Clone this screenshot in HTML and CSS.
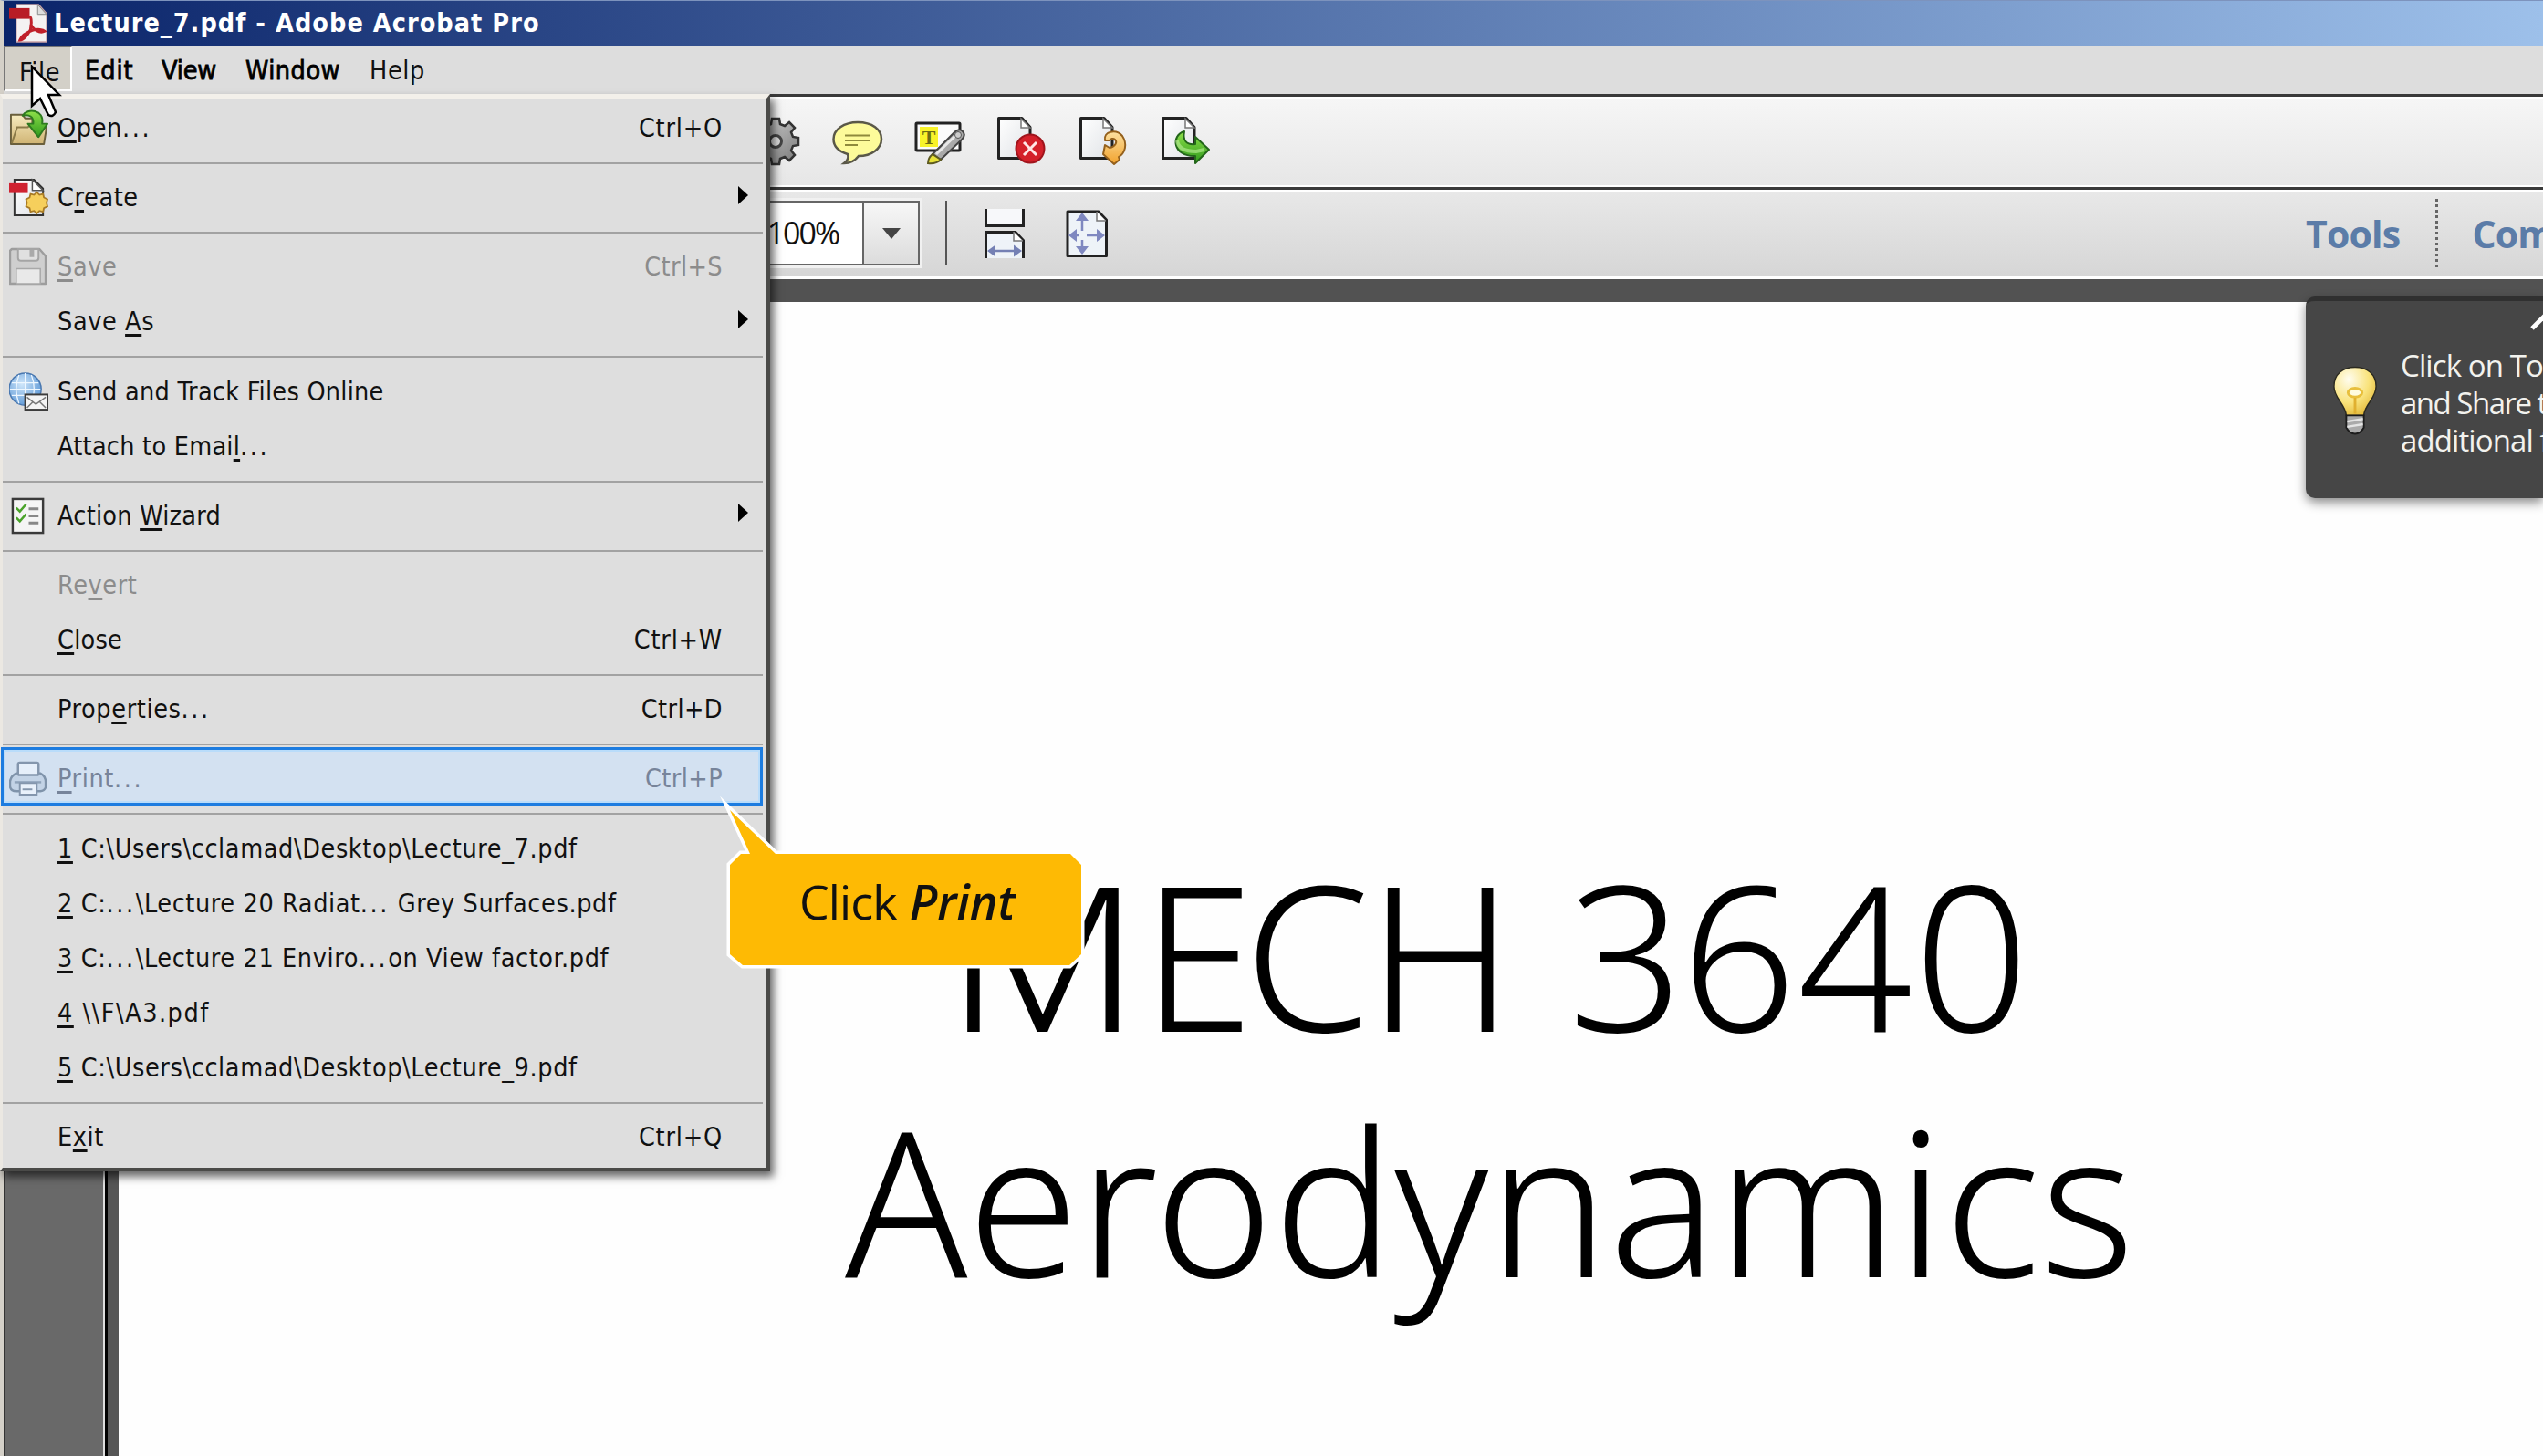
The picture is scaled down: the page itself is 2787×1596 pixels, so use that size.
FILE: index.html
```
<!DOCTYPE html>
<html lang="en">
<head>
<meta charset="utf-8">
<title>Lecture_7.pdf - Adobe Acrobat Pro</title>
<link rel="stylesheet" href="styles.css">
</head>
<body>
<svg width="0" height="0" class="defs" aria-hidden="true">
  <defs>
    <linearGradient id="paper" x1="0" y1="0" x2="1" y2="1"><stop offset="0" stop-color="#fff"/><stop offset="1" stop-color="#dfe2e6"/></linearGradient>
    <linearGradient id="folder" x1="0" y1="0" x2="0" y2="1"><stop offset="0" stop-color="#f7ecc0"/><stop offset="1" stop-color="#cfb373"/></linearGradient>
    <linearGradient id="green" x1="0" y1="0" x2="0" y2="1"><stop offset="0" stop-color="#8ee04a"/><stop offset="1" stop-color="#2f9a1c"/></linearGradient>
    <linearGradient id="gold" x1="0" y1="0" x2="0" y2="1"><stop offset="0" stop-color="#fce0a0"/><stop offset="1" stop-color="#f2a22c"/></linearGradient>
    <linearGradient id="steel" x1="0" y1="0" x2="1" y2="1"><stop offset="0" stop-color="#d8d8d8"/><stop offset="1" stop-color="#777"/></linearGradient>
    <radialGradient id="globe" cx=".4" cy=".35" r=".7"><stop offset="0" stop-color="#cfe6fa"/><stop offset="1" stop-color="#5b97d6"/></radialGradient>
    <radialGradient id="bulb" cx=".35" cy=".25" r=".8"><stop offset="0" stop-color="#fffdf0"/><stop offset=".6" stop-color="#f9e37c"/><stop offset="1" stop-color="#e3b93a"/></radialGradient>
    <g id="sheet"><path d="M2.500 3.500H28l9 10V47.500H2.500Z" fill="url(#paper)" stroke="#222" stroke-width="3" stroke-linejoin="round"/><path d="M27 4v10h10Z" fill="#fff" stroke="#777" stroke-width="1.500"/></g>
  </defs>
</svg>

<header class="titlebar">
  <svg class="app-icon" viewBox="0 0 44 44"><path d="M8 1h25l9 10v32H8Z" fill="#f4f2f2" stroke="#c9a3a6" stroke-width="1.500"/><path d="M32 1v11h10Z" fill="#ddd" stroke="#888"/><path d="M0 5h23v12H0Z" fill="#b81c26"/><path d="M23 14c4 4 1 11 1 15-3 6-8 12-12 12 2-6 8-9 14-11 6-2 12-1 14 1-6 3-13-2-16-8" fill="none" stroke="#c0202a" stroke-width="3"/></svg>
  <span>Lecture_7.pdf - Adobe Acrobat Pro</span>
</header>

<nav class="menubar">
  <span class="mb-item mb-file">File</span>
  <span class="mb-item mb-edit strong">Edit</span>
  <span class="mb-item mb-view strong">View</span>
  <span class="mb-item mb-window strong">Window</span>
  <span class="mb-item mb-help">Help</span>
</nav>

<section class="toolbar quick-tools">
  <svg class="tool" viewBox="0 0 56 56"><path d="M24 4h8l1 6 5 2 5-4 6 6-4 5 2 5 6 1v8l-6 1-2 5 4 5-6 6-5-4-5 2-1 6h-8l-1-6-5-2-5 4-6-6 4-5-2-5-6-1v-8l6-1 2-5-4-5 6-6 5 4 5-2Z" fill="url(#steel)" stroke="#333" stroke-width="2.500"/><circle cx="28" cy="29" r="6.500" fill="#ddd" stroke="#444" stroke-width="3"/></svg>
  <svg class="tool" viewBox="0 0 56 56"><path d="M28 8c16 0 26 8 26 18.500S43 45 29 45c-3 4-8 8-16 8 4-3 5-7 4-10C7 40 1.500 34 1.500 26.500 1.500 16 13 8 28 8Z" fill="#fdfb9a" stroke="#5a5848" stroke-width="2.500"/><path d="M14 22.500h28M14 28h28M14 33h14" stroke="#8f8a3c" stroke-width="2.200"/></svg>
  <svg class="tool" viewBox="0 0 56 56"><rect x="2" y="9" width="48" height="30" rx="1" fill="#fbfbfb" stroke="#222" stroke-width="3"/><rect x="6" y="13" width="20" height="22" fill="#f8f32a"/><text x="16" y="32" class="tool-letter">T</text><path d="M20 43 44 19q5-5 9-1t-1 9L29 49Z" fill="#aaa" stroke="#444" stroke-width="2"/><path d="M24 43 47 21" stroke="#e8e8e8" stroke-width="3"/><circle cx="48" cy="22" r="3.500" fill="#ccc" stroke="#555"/><path d="M20 43l9 6q-5 5-14 4 0-6 5-10Z" fill="#e8e337" stroke="#5d5a20" stroke-width="2"/></svg>
  <svg class="tool" viewBox="0 0 56 56"><use href="#sheet"/><circle cx="37" cy="37" r="15.500" fill="#d4202a" stroke="#a0141c" stroke-width="2"/><path d="M30 30 44 44M44 30 30 44" stroke="#ffe6e6" stroke-width="3"/></svg>
  <svg class="tool" viewBox="0 0 56 56"><use href="#sheet"/><path d="M29 28C27 18 41 15 48 23c6 9 3 19-4 23l1 3-6 5L27 43l2-10 5 3c6-1 9-6 6-9-2-2-5-1-6 1Z" fill="url(#gold)" stroke="#94601c" stroke-width="2" stroke-linejoin="round"/></svg>
  <svg class="tool" viewBox="0 0 56 56"><use href="#sheet"/><path d="M26 18C11 22 13 46 38 45v8L53 38 38 24v8C28 33 24 28 26 18Z" fill="url(#green)" stroke="#23661a" stroke-width="2" stroke-linejoin="round"/><path d="M18 28c1 8 8 12 21 12l9-2" fill="none" stroke="#bdf09a" stroke-width="4" opacity=".6"/></svg>
</section>

<section class="toolbar view-tools">
  <div class="zoom-box"><span class="zoom-value">100%</span><span class="zoom-drop"><svg viewBox="0 0 20 12"><path d="M0 0h20L10 12Z" fill="#444"/></svg></span></div>
  <i class="divider"></i>
  <svg class="fit" viewBox="0 0 46 54"><path d="M2.500 0v18.500h41V0" fill="#f7f8fa" stroke="#222" stroke-width="3"/><path d="M2.500 54V25.500H35l8.500 9V54" fill="#eef3f8" stroke="#222" stroke-width="3"/><path d="M33 25v10h10" fill="#fff" stroke="#777" stroke-width="1.500"/><path d="M8 46h30" stroke="#7480b4" stroke-width="2.500"/><path d="M4 46l9-6.500v13ZM42 46l-9-6.500v13Z" fill="#7480b4"/></svg>
  <svg class="fit" viewBox="0 0 46 54"><path d="M2 3H36l8.500 9V51.500H2Z" fill="#eef3f8" stroke="#222" stroke-width="3" stroke-linejoin="round"/><path d="M34 3v10h10" fill="#fff" stroke="#777" stroke-width="1.500"/><g stroke="#7f88c0" stroke-width="2.500"><path d="M18 10v14M18 34v12M8 29h7M23 29h14"/></g><path d="M18 4l7 9H11ZM18 50l7-9H11ZM3 29l9-7v14ZM43 29l-9-7v14Z" fill="#7f88c0"/></svg>
  <div class="panels"><span>Tools</span><i class="dots"></i><span>Comment</span></div>
</section>

<main class="workspace">
  <aside class="nav-pane"></aside>
  <article class="page">
    <p class="line-one"><span class="g-m">M</span><span class="g-e">E</span><span class="g-c">C</span>H <span class="g-c">3</span>640</p>
    <p class="line-two">Aerodynamics</p>
  </article>
</main>

<div class="hint">
  <svg class="bulb" viewBox="0 0 52 80"><path d="M26 2C12 2 2 10 2 24c0 14 13 20 14 33h20C37 44 50 38 50 24 50 10 40 2 26 2Z" fill="url(#bulb)" stroke="#2b2a20" stroke-width="1.500"/><ellipse cx="26" cy="31" rx="8" ry="5" fill="#fffce0" stroke="#e8bf3c" stroke-width="3"/><path d="M26 37v18" stroke="#e0b030" stroke-width="3"/><path d="M16 57h20v14q-4 7-10 7t-10-7Z" fill="#aaa" stroke="#1c1c1c" stroke-width="2"/><path d="M17 64l18-3M17 70l18-3" stroke="#e4e4e4" stroke-width="2.500"/></svg>
  <p>Click on Tools,<br><span class="tight">and Share to</span><br>additional features</p>
  <svg class="hint-close" viewBox="0 0 20 20"><path d="M2 18 18 2" stroke="#fff" stroke-width="5"/></svg>
</div>

<div class="menu">
  <div class="row"><svg class="ic" viewBox="0 0 44 44"><path d="M2 40V7h13l3 4h8v10h16l-3 19Z" fill="url(#folder)" stroke="#6a5f3c" stroke-width="2" stroke-linejoin="round"/><path d="M3 39 9 21h12l4-4h12" fill="none" stroke="#8b7a48" stroke-width="2"/><path d="M15 8C20-1 40 1 37 17h6L33 32 21 17h6C28 9 22 6 15 8Z" fill="url(#green)" stroke="#2e7a20" stroke-width="2" stroke-linejoin="round"/></svg><span><u>O</u>pen<b>...</b></span><kbd>Ctrl+O</kbd></div>
  <hr>
  <div class="row"><svg class="ic" viewBox="0 0 44 44"><path d="M6 2h22l10 10v30H6Z" fill="url(#paper)" stroke="#333" stroke-width="2"/><path d="M26 2v12h12Z" fill="#fff" stroke="#555" stroke-width="1.500"/><path d="M0 6h21v11H0Z" fill="#cf2230"/><path d="M31 16l3 3 4-1 1 4 4 2-1 4 1 4-4 2-1 4-4-1-3 3-3-3-4 1-1-4-4-2 1-4-1-4 4-2 1-4 4 1Z" fill="#f6cf5c" stroke="#a87a24" stroke-width="1.800"/></svg><span>C<u>r</u>eate</span><i class="arrow"></i></div>
  <hr>
  <div class="row off"><svg class="ic" viewBox="0 0 44 44"><path d="M3 2h31l7 8v31H1V4Z" fill="#cfcfcf" stroke="#9d9d9d" stroke-width="2.500" stroke-linejoin="round"/><path d="M10 2v10q0 3 3 3h17q3 0 3-3V2Z" fill="#e0e0e0" stroke="#a5a5a5" stroke-width="2"/><path d="M23 3h5v8h-5Z" fill="#aaa"/><path d="M8 24h27v17H8Z" fill="#e9e9e9" stroke="#a8a8a8" stroke-width="1.500"/></svg><span><u>S</u>ave</span><kbd class="snug-key">Ctrl+S</kbd></div>
  <div class="row"><span>Save <u>A</u>s</span><i class="arrow"></i></div>
  <hr>
  <div class="row"><svg class="ic" viewBox="0 0 44 44"><circle cx="18" cy="19" r="18" fill="url(#globe)" stroke="#4a78b0" stroke-width="1.500"/><path d="M3 12h30M1 19h34M3 26h30M18 1v36M11 3q-6 16 0 32M25 3q6 16 0 32" fill="none" stroke="#eef7ff" stroke-width="1.300"/><rect x="18" y="25" width="25" height="17" fill="#f4f4f4" stroke="#3c3c3c" stroke-width="2"/><path d="M20 28l10 8 11-8M20 40l7-7M41 40l-7-7" fill="none" stroke="#777" stroke-width="1.500"/></svg><span class="snug">Send and Track Files Online</span></div>
  <div class="row"><span class="snug">Attach to Emai<u>l</u><b>...</b></span></div>
  <hr>
  <div class="row"><svg class="ic" viewBox="0 0 44 44"><rect x="4" y="3" width="34" height="38" fill="#f5f5f5" stroke="#3a3a3a" stroke-width="2.500"/><path d="M8 13l4 4 7-8M8 24l4 4 7-8" fill="none" stroke="#4aa32a" stroke-width="2.500"/><path d="M22 14h11M22 22h11M22 30h11" stroke="#888" stroke-width="3"/></svg><span class="snug">Action <u>W</u>izard</span><i class="arrow"></i></div>
  <hr>
  <div class="row off"><span>Re<u>v</u>ert</span></div>
  <div class="row"><span class="snug"><u>C</u>lose</span><kbd>Ctrl+W</kbd></div>
  <hr>
  <div class="row"><span>Prop<u>e</u>rties<b>...</b></span><kbd class="snug-key">Ctrl+D</kbd></div>
  <hr>
  <div class="row off picked"><svg class="ic" viewBox="0 0 44 44"><path d="M8 16h27q6 3 6 10v6q-2 4-6 4H8q-6 0-7-5v-6q1-6 7-9Z" fill="#c3d3e6" stroke="#7f93aa" stroke-width="2.500"/><rect x="10" y="4" width="23" height="14" rx="2" fill="#e6effa" stroke="#8496ad" stroke-width="2.500"/><path d="M6 26h30" stroke="#8fa3ba" stroke-width="2.500"/><path d="M12 27h19v13H12Z" fill="#e9f1fb" stroke="#8496ad" stroke-width="2"/><path d="M15 34h11" stroke="#8496ad" stroke-width="2"/></svg><span><u>P</u>rint<b>...</b></span><kbd class="snug-key">Ctrl+P</kbd></div>
  <hr>
  <div class="row"><span><u>1</u> C:\Users\cclamad\Desktop\Lecture_7.pdf</span></div>
  <div class="row"><span><u>2</u> C:<b>...</b>\Lecture 20 Radiat<b>...</b> Grey Surfaces.pdf</span></div>
  <div class="row"><span><u>3</u> C:<b>...</b>\Lecture 21 Enviro<b>...</b>on View factor.pdf</span></div>
  <div class="row"><span class="wide"><u>4</u> \\F\A3.pdf</span></div>
  <div class="row"><span><u>5</u> C:\Users\cclamad\Desktop\Lecture_9.pdf</span></div>
  <hr>
  <div class="row"><span>E<u>x</u>it</span><kbd>Ctrl+Q</kbd></div>
</div>

<div class="callout">
  <svg viewBox="0 0 400 190"><path d="M10 14 32 62H22L10 74V172L24 184H382L395 172V74L383 62H60Z" class="bubble"/></svg>
  <p><span>Click</span> <em>Print</em></p>
</div>

<svg class="cursor" viewBox="0 0 36 60"><path d="M2 2V45l9-8 9 18q5 3 8-3L20 33H32Z" fill="#fff" stroke="#000" stroke-width="2.500"/></svg>
</body>
</html>
```
FILE: styles.css
```
*, *::before { box-sizing: border-box; }
html, body { height: 100%; }
body {
  margin: 0;
  display: flex;
  flex-direction: column;
  overflow: hidden;
  position: relative;
  background: #fff;
  color: #111;
  font: 28.5px "DejaVu Sans Condensed", "DejaVu Sans", sans-serif;
}
p { margin: 0; }
svg { display: block; flex: none; }
.defs { position: absolute; }

.titlebar {
  height: 50px;
  flex: none;
  display: flex;
  align-items: center;
  gap: 6px;
  padding-left: 6px;
  border-left: 4px solid #d4d0c8;
  border-top: 1px solid #7d93bd;
  background: linear-gradient(90deg, #0a246a, #9dc0ea);
  color: #fff;
  font-weight: bold;
  letter-spacing: 1.05px;
  line-height: 48px;
}
.app-icon { width: 43px; height: 43px; }

.menubar {
  height: 56px;
  flex: none;
  display: flex;
  background: #dddddd;
  border-left: 4px solid #d4d0c8;
  border-bottom: 3px solid #3a3a3a;
  line-height: 56px;
}
.mb-item { flex: none; }
.strong { -webkit-text-stroke: .8px #000; color: #000; }
.mb-file { width: 75px; height: 50px; padding-left: 15px; line-height: 56px; background: #d3d0c8; border: 2px solid; border-color: #777 #fff #fff #777; letter-spacing: .6px; }
.mb-edit { margin-left: 14px; width: 84px; letter-spacing: 1px; }
.mb-view { width: 92px; letter-spacing: -.2px; }
.mb-window { width: 136px; letter-spacing: .5px; }
.mb-help { letter-spacing: .6px; }

.toolbar { flex: none; display: flex; align-items: center; }
.quick-tools {
  height: 102px;
  padding: 0 0 5px 822px;
  gap: 34px;
  border-top: 2px solid #fff;
  border-bottom: 3px solid #3a3a3a;
  background: linear-gradient(#f6f6f6, #e6e6e6);
  box-shadow: inset 0 -2px #fff;
}
.tool { width: 56px; height: 56px; }
.tool-letter { font: bold 22px "Liberation Serif", serif; fill: #6b6a14; text-anchor: middle; }

.view-tools {
  height: 98px;
  border-top: 2px solid #fff;
  border-bottom: 3px solid #fff;
  padding: 0 0 2px 760px;
  background: linear-gradient(#e8e8e8, #d6d6d6);
  overflow: hidden;
}
.zoom-box {
  width: 248px;
  height: 71px;
  flex: none;
  display: flex;
  border: 2px solid #666;
  background: #fff;
  outline: 3px solid #f1f1f1;
}
.zoom-value { flex: 1; padding-right: 26px; text-align: right; font: 34px/66px "Open Sans", sans-serif; letter-spacing: -2px; }
.zoom-drop { width: 61px; display: flex; align-items: center; justify-content: center; border-left: 2px solid #666; background: linear-gradient(#f7f7f7, #dcdcdc); }
.zoom-drop svg { width: 20px; height: 12px; }
.divider { flex: none; width: 2px; height: 71px; margin: 0 40px 0 28px; background: #555; }
.fit { width: 46px; height: 54px; margin-right: 44px; }
.panels { flex: none; margin-left: 1269px; display: flex; align-items: center; color: #5b7ca8; font: bold 41px/82px "Open Sans", sans-serif; letter-spacing: -.8px; }
.dots { width: 0; height: 75px; margin: 0 37px 0 39px; border-left: 3px dotted #666; }

.workspace { flex: 1; display: flex; border-top: 25px solid #525252; min-height: 0; }
.nav-pane { width: 130px; flex: none; background: linear-gradient(90deg, #d4d0c8 4px, #333 4px 6px, #696969 6px 113px, #ddd 113px 115px, #000 115px 118px, #565656 118px); }
.page { flex: 1; background: #fefefe; padding-top: 580px; font: 300 221px/269px "Noto Sans", sans-serif; color: #000; white-space: nowrap; }
.line-one { padding-left: 908px; letter-spacing: 1.3px; }
.line-two { padding-left: 796px; }
/* Widths of the deck's own display face */
.g-m { display: inline-block; transform: scaleX(1.115); transform-origin: 21px 0; margin-right: 20px; }
.g-e { letter-spacing: -10.700px; }
.g-c { letter-spacing: -2.500px; }

.hint {
  position: absolute;
  left: 2527px;
  top: 325px;
  width: 260px;
  height: 221px;
  padding: 50px 0 0 29px;
  display: flex;
  gap: 25px;
  overflow: hidden;
  border-radius: 10px 0 0 10px;
  border-top: 5px solid #303030;
  background: #464646;
  box-shadow: 0 5px 12px rgba(0, 0, 0, .45);
  color: #f2f2ee;
  font: 33px/41px "Open Sans", sans-serif;
  letter-spacing: -.9px;
  white-space: nowrap;
}
.tight { letter-spacing: -1.5px; }
.bulb { width: 50px; height: 80px; margin-top: 19px; }
.hint-close { position: absolute; left: 246px; top: 12px; width: 20px; height: 20px; }

.menu {
  position: absolute;
  left: 0;
  top: 103px;
  width: 844px;
  height: 1181px;
  padding-top: 3px;
  background: #dedede;
  border: solid;
  border-width: 5px 4px 4px 3px;
  border-color: #f3f0ea #4a4a48 #4a4a48 #ebe8e2;
  box-shadow: 4px 6px 9px rgba(0, 0, 0, .6);
}
.row { position: relative; height: 60px; display: flex; align-items: center; padding: 0 48px 0 60px; line-height: 60px; white-space: pre; letter-spacing: .6px; }
.ic { position: absolute; left: 7px; top: 8px; width: 43px; height: 43px; }
.row b { font-weight: normal; letter-spacing: 2.6px; }
.row u { text-decoration: underline 2.500px; text-underline-offset: 4px; text-decoration-skip-ink: none; }
.row .snug { letter-spacing: .25px; }
.row .wide { letter-spacing: 1.5px; }
kbd { margin-left: auto; font: inherit; letter-spacing: .8px; }
.snug-key { letter-spacing: .4px; }
.arrow { margin: -7px -28px 0 auto; border: 10px solid transparent; border-left: 11px solid #000; border-right: 0; }
.off { color: #8c8c8c; }
.picked { color: #77849a; }
.picked::before { content: ""; position: absolute; left: -2px; right: 4px; top: -5px; height: 64px; background: #d3e1f1; border: 3px solid #1d7ce0; box-shadow: inset 0 0 0 2px #b9dcfa; }
.picked > * { z-index: 1; }
.picked span { position: relative; }
hr { height: 2px; margin: 7px 4px 7.200px 0; border: 0; background: #a2a2a2; }

.callout { position: absolute; left: 790px; top: 874px; width: 400px; height: 190px; }
.callout svg { width: 400px; height: 190px; overflow: visible; }
.bubble { fill: #feba04; stroke: #fff; stroke-width: 7px; stroke-miterlimit: 8; paint-order: stroke; }
.callout p { position: absolute; left: 86px; top: 79px; display: flex; gap: 14px; font: 52px/70px "Open Sans", sans-serif; color: #111; letter-spacing: -.9px; }
.callout em { font-weight: 600; letter-spacing: 0; }
.cursor { position: absolute; left: 33px; top: 71px; width: 36px; height: 60px; }
```
